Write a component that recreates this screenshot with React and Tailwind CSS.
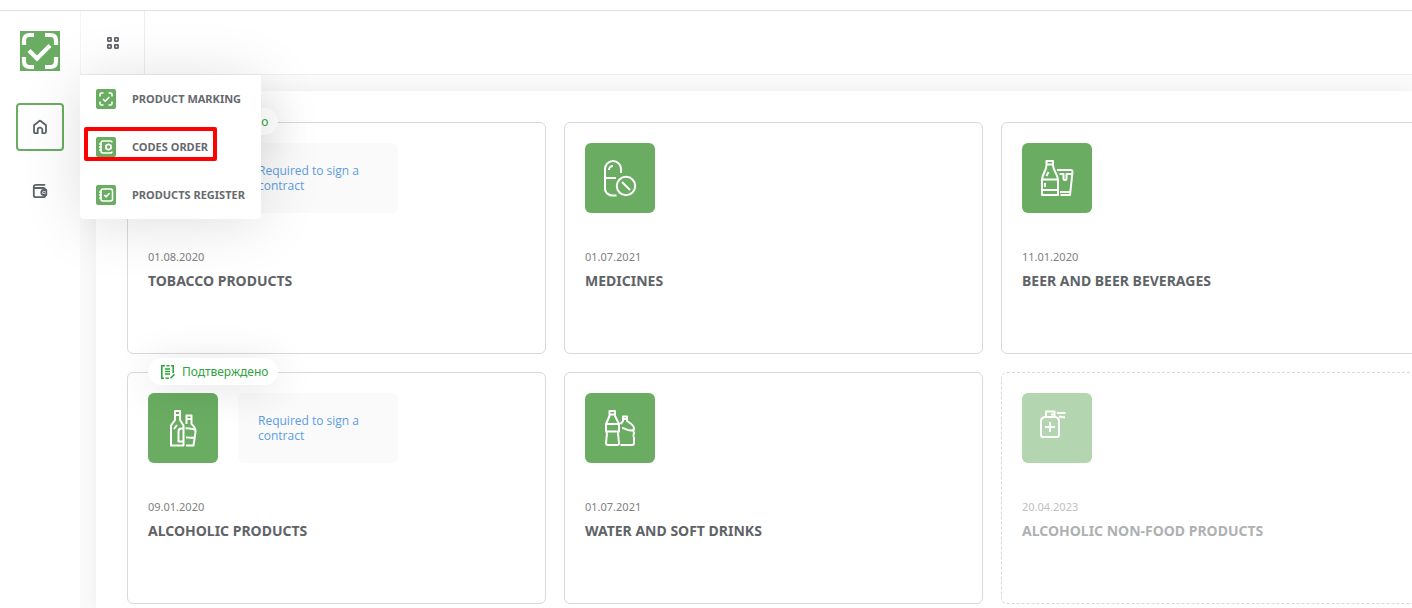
const MENU = [
  { label: 'Product marking', icon: 'scan' },
  { label: 'Codes order', icon: 'codes', highlighted: true },
  { label: 'Products register', icon: 'register' },
]

const GROUPS = [
  { title: 'Tobacco products', date: '01.08.2020', icon: 'tobacco', confirmed: true, contract: true },
  { title: 'Medicines', date: '01.07.2021', icon: 'medicine' },
  { title: 'Beer and beer beverages', date: '11.01.2020', icon: 'beer' },
  { title: 'Alcoholic products', date: '09.01.2020', icon: 'alcohol', confirmed: true, contract: true },
  { title: 'Water and soft drinks', date: '01.07.2021', icon: 'water' },
  { title: 'Alcoholic non-food products', date: '20.04.2023', icon: 'spray', disabled: true },
]

const GROUP_ICONS = {
  tobacco: <path d="M18 38h26v7H18zM38 38v7M48 38v7M52 38v7M48 33c0-5-6-3-6-8s4-4 4-8M52 33c0-7-5-6-5-10" />,
  medicine: (
    <>
      <path d="M36 30v-4a8 8 0 0 0-16 0v19a8 7 0 0 0 9 7.500h2.500M20 35h11M24 27a4 4 0 0 1 4-4" />
      <circle cx="41" cy="43" r="9.200" />
      <path d="m37 39 8 8" />
    </>
  ),
  beer: (
    <>
      <path d="M24.500 18h6.500v4c0 6 5 9 5 15v15H20V37c0-6 4.500-9 4.500-15ZM24.500 21.500H31M20 36.500h16M20 47h16M23 40v4M26.500 29l-2 4" />
      <path d="M35 27h13.500c1.500 0 2 .5 2 2L48 52h-9.500M38 49h10M37.500 31h4v2.500M41.500 33v2.500c0 2 3 2 3 0V31H50" />
    </>
  ),
  alcohol: (
    <>
      <path d="M27 18h5v9l3.500 5.500v20H23v-20l4-5.500ZM27 22h5M26 36l3-4" />
      <path d="M38.500 27v-4.500h5V31c3 2.500 4 4.500 4 8L45.500 52.500H38M38.500 26h5M38.500 27v4M35.500 35.500h-2c-2 0-3 1-3 3v10h5M37.500 35.500c3-1 6 .5 9.500 1M38 44.500c3-.5 5 1 8 0" />
    </>
  ),
  water: (
    <>
      <path d="M24.500 18H30v5l4 8v7c-2 3-.5 4-.5 7 0 2 .5 3 .5 5s-.5 2-2 2h-9c-1.500 0-2-.5-2-2s.5-3 .5-5c0-3 1.500-4-.5-7v-7l3.500-8ZM24.500 21.500H30M21 31h12.500M21 38.500h12.500" />
      <path d="M35.500 31l2.500-3v-4.500h4V28c4 3 7 4 7 7.500-1 2-1 3 0 4.500-1 2-1 3 0 5v5c0 1.500-.5 2-2 2H35.500M38 26h4M37 35c4 0 5 4 12 2" />
    </>
  ),
  spray: (
    <>
      <path d="M24 24v-5.500h8.500V24M29 21.500h3.500M22.500 24h11c2 .5 3.500 2 3.500 4v14c0 1.500-.5 2-2 2H21c-1.500 0-2-.5-2-2V28c0-2 1.500-3.500 3.500-4Z" />
      <path d="M28 29v10M23 34h10M35 20h8.500M37 23.500l6 1" />
    </>
  ),
}

const MENU_ICONS = {
  scan: (
    <>
      <path d="M4 7.500v-2C4 4.500 4.500 4 5.500 4h2M12.500 4h2c1 0 1.500.5 1.500 1.500v2M16 12.500v2c0 1-.5 1.500-1.500 1.500h-2M7.500 16h-2c-1 0-1.500-.5-1.500-1.500v-2" />
      <path d="m7 10 2.200 2.200L13.300 8" />
    </>
  ),
  codes: (
    <>
      <path d="M16 5.500c0-1.200-.8-1.500-2-1.500H7C5.500 4 5 4.500 5 6v8c0 1.500.5 2 2 2h7c1.200 0 2-.3 2-1.500M3 7h3M3 10h3M3 13h3" />
      <circle cx="12.500" cy="10" r="2.500" />
      <path d="M12.500 6.500v1M12.500 12.500v1M9.500 8.200l.8.500M15.500 8.200l-.8.500M9.500 11.800l.8-.5M15.500 11.800l-.8-.5" />
    </>
  ),
  register: (
    <>
      <rect x="5" y="4" width="11.500" height="12" rx="2" />
      <path d="M3 7h3M3 10h3M3 13h3M8.300 10l1.800 1.800L13.500 8.300" />
    </>
  ),
}

function Logo() {
  return (
    <svg className="size-10" viewBox="0 0 40 40" fill="none" stroke="#fff" strokeWidth="4.200">
      <rect width="40" height="40" fill="#6aad62" stroke="none" />
      <path d="M4 14V9.500C4 6 6 4 9.500 4H14M25 4h5.500C34 4 36 6 36 9.500V14M36 26v4.500c0 3.500-2 5.500-5.500 5.500H25M14 36H9.500C6 36 4 34 4 30.500V26" />
      <path d="m9 19.500 8 8L30 14.500" />
    </svg>
  )
}

function Sidebar() {
  return (
    <nav aria-label="Main" className="flex w-20 shrink-0 flex-col items-center bg-white pt-5">
      <a href="#home" aria-label="Home"><Logo /></a>
      <a href="#groups" aria-label="Product groups" className="mt-8 flex size-12 items-center justify-center rounded-sm border-2 border-[#6aad62]">
        <svg className="size-4" viewBox="0 0 16 16" fill="none" stroke="#5f6368" strokeWidth="1.800" strokeLinejoin="round">
          <path d="M2 6.300 7 2.200c.6-.5 1.400-.5 2 0l5 4.100v6.400c0 .9-.6 1.500-1.500 1.500H10.300V11a2.300 2.300 0 0 0-4.600 0v3.200H3.500c-.9 0-1.500-.6-1.500-1.500Z" />
        </svg>
      </a>
      <a href="#wallet" aria-label="Wallet" className="mt-4 flex size-12 items-center justify-center">
        <svg className="size-4" viewBox="0 0 16 16" fill="none" stroke="#5f6368" strokeWidth="1.800" strokeLinecap="round" strokeLinejoin="round">
          <path d="M12.500 1.800H3.800c-1.200 0-2 .8-2 1.700v8.700c0 1.200.8 2 2 2h7.400c1.200 0 2-.8 2-2M1.800 3.500c0 1 .8 1.500 2 1.500h7.400c1.200 0 2 .8 2 2" />
          <path d="M14.300 7v5h-2.500a2.500 2.500 0 0 1 0-5Z" />
          <path d="M12 9.500h.1" />
        </svg>
      </a>
    </nav>
  )
}

function AppsMenu() {
  return (
    <ul className="absolute top-16 left-0 z-20 rounded-b-sm bg-white shadow-[0_4px_60px_rgba(0,0,0,0.13)]">
      {MENU.map(({ label, icon, highlighted }) => (
        <li key={label} className="relative">
          <a href={`#${icon}`} className="flex h-12 items-center gap-4 px-4 text-[11px] font-bold whitespace-nowrap text-[#66696e] uppercase">
            <svg className="size-5 rounded-xs bg-[#6aad62]" viewBox="0 0 20 20" fill="none" stroke="#fff" strokeWidth="1.600">
              {MENU_ICONS[icon]}
            </svg>
            {label}
          </a>
          {highlighted && <span className="pointer-events-none absolute top-1 left-1 h-[34px] w-[133px] rounded-xs border-4 border-[#ff0000]" />}
        </li>
      ))}
    </ul>
  )
}

function GroupCard({ title, date, icon, confirmed, contract, disabled }) {
  return (
    <article className={`relative h-[232px] rounded-md border border-[#d9d9d9] p-5 ${disabled ? 'border-dashed' : ''}`}>
      {confirmed && (
        <span className="absolute -top-[15px] left-5 z-10 flex h-[27px] items-center gap-1.5 rounded-full bg-white pr-2.5 pl-3 text-xs whitespace-nowrap text-[#2fa33c] shadow-[0_4px_40px_rgba(0,0,0,0.12)]">
          <svg className="size-4" viewBox="0 0 16 16" fill="none" stroke="currentColor" strokeWidth="1.600">
            <path d="M4 14.200H1.800V1.800H5M6.500 1.800h3M11 1.800h2.200V9M5 5h5M5 7.500h5M5 10h5M5.500 14.200H9M10.500 14.200l4-4" />
          </svg>
          Подтверждено
        </span>
      )}
      <div className={disabled ? 'opacity-50' : ''}>
        <div className="flex gap-5">
          <svg className="size-[70px] rounded-md bg-[#6aad62]" viewBox="0 0 70 70" fill="none" stroke="#fff" strokeWidth="2" strokeLinejoin="round">
            {GROUP_ICONS[icon]}
          </svg>
          {contract && (
            <a href="#contract" className="flex w-40 items-center rounded-md bg-[#fafafa] px-5 font-['Open_Sans',sans-serif] text-xs leading-[15px] font-medium text-[#5a9de2]">
              Required to sign a contract
            </a>
          )}
        </div>
        <p className="mt-9 text-[11px] leading-4 text-[#808080]">{date}</p>
        <h2 className="mt-1.5 text-sm font-bold text-[#5f6368] uppercase">{title}</h2>
      </div>
    </article>
  )
}

export default function App() {
  return (
    <div className="h-screen overflow-hidden bg-white pt-2.5 font-['Noto_Sans',sans-serif]">
      <div className="flex h-full border-t border-[#e0e0e0]">
        <Sidebar />
        <div className="flex min-w-0 flex-1 flex-col bg-[#fafafa]">
          <header className="relative flex h-16 shrink-0 border-b border-[#eeeeee] bg-white">
            <button type="button" aria-label="Applications" className="flex w-[65px] items-center justify-center border-x border-r-[#eeeeee] border-l-[#f5f5f5]">
              <svg className="size-4" viewBox="0 0 16 16" fill="none" stroke="#5f6368" strokeWidth="1.700">
                <rect x="2.800" y="2.800" width="3.300" height="3.300" rx=".5" />
                <rect x="9.800" y="2.800" width="3.300" height="3.300" rx=".5" />
                <rect x="2.800" y="9.800" width="3.300" height="3.300" rx=".5" />
                <rect x="9.800" y="9.800" width="3.300" height="3.300" rx=".5" />
              </svg>
            </button>
            <AppsMenu />
          </header>
          <main className="mt-4 ml-4 flex-1 overflow-hidden rounded-tl-sm bg-white pt-[31px] pl-[31px] shadow-[0_0_16px_rgba(0,0,0,0.05)]">
            <div className="grid min-w-[1293px] grid-cols-3 gap-[18px]">
              {GROUPS.map((group) => <GroupCard key={group.title} {...group} />)}
            </div>
          </main>
        </div>
      </div>
    </div>
  )
}
